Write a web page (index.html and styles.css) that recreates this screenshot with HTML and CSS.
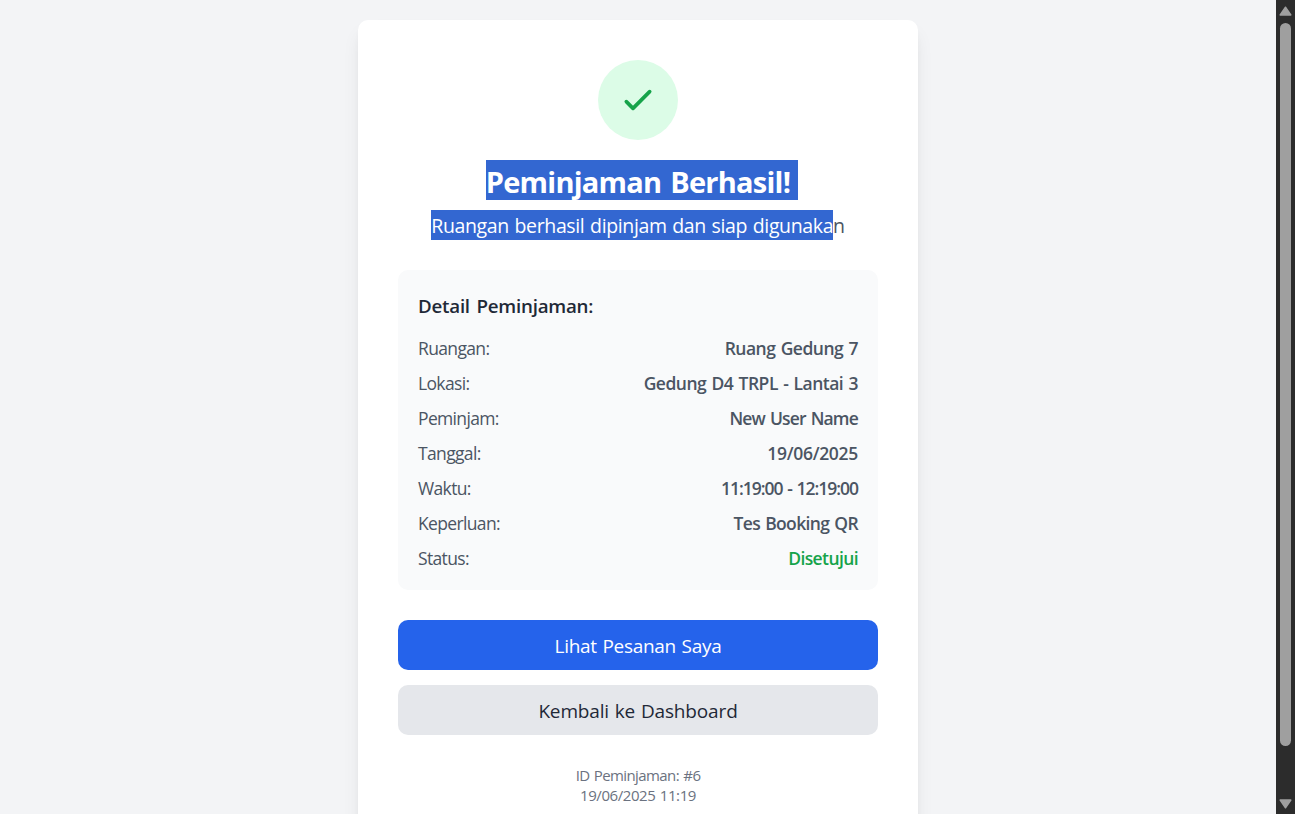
FILE: index.html
```html
<!DOCTYPE html>
<html lang="id">
<head>
<meta charset="utf-8">
<title>Peminjaman Berhasil</title>
<link rel="stylesheet" href="styles.css">
</head>
<body>
<div class="window">
  <main class="page">
    <section class="card">
      <div class="badge">
        <svg width="40" height="40" viewBox="0 0 24 24" fill="none" stroke="currentColor" stroke-width="2" stroke-linecap="round" stroke-linejoin="round"><path d="M5 13l4 4L19 7"/></svg>
      </div>
      <h1 class="title"><span class="selected title-selection">Peminjaman Berhasil!</span></h1>
      <p class="subtitle"><span class="selected">Ruangan berhasil dipinjam dan siap digunaka</span><span>n</span></p>
      <div class="details">
        <h2 class="details-title"><span>Detail Peminjaman:</span></h2>
        <dl class="rows">
          <div class="row"><dt>Ruangan:</dt><dd class="v-room">Ruang Gedung 7</dd></div>
          <div class="row"><dt>Lokasi:</dt><dd class="v-place">Gedung D4 TRPL - Lantai 3</dd></div>
          <div class="row"><dt>Peminjam:</dt><dd class="v-user">New User Name</dd></div>
          <div class="row"><dt>Tanggal:</dt><dd class="v-date">19/06/2025</dd></div>
          <div class="row"><dt>Waktu:</dt><dd class="v-time">11:19:00 - 12:19:00</dd></div>
          <div class="row"><dt>Keperluan:</dt><dd class="v-use">Tes Booking QR</dd></div>
          <div class="row"><dt>Status:</dt><dd class="v-status">Disetujui</dd></div>
        </dl>
      </div>
      <div class="actions">
        <a class="button primary">Lihat Pesanan Saya</a>
        <a class="button secondary">Kembali ke Dashboard</a>
      </div>
      <footer class="meta">
        <p class="meta-id">ID Peminjaman: #6</p>
        <p class="meta-time">19/06/2025 11:19</p>
      </footer>
    </section>
  </main>
  <div class="scrollbar">
    <svg width="13" height="10" viewBox="0 0 13 10"><path d="M6.5 1.2L11.8 9H1.2z" fill="#9f9f9f" stroke="#9f9f9f" stroke-width="1.5" stroke-linejoin="round"/></svg>
    <div class="thumb"></div>
    <svg width="13" height="10" viewBox="0 0 13 10"><path d="M6.5 8.8L11.8 1H1.2z" fill="#9f9f9f" stroke="#9f9f9f" stroke-width="1.5" stroke-linejoin="round"/></svg>
  </div>
</div>
</body>
</html>
```
FILE: styles.css
```css
* { box-sizing: border-box; margin: 0; padding: 0; }
body { font-family: "Open Sans", "Noto Sans", sans-serif; color: #1f2937; overflow: hidden; }
.window { display: flex; height: 814px; overflow: hidden; background: #f3f4f6; }
.page { flex: 1; display: flex; justify-content: center; align-items: flex-start; padding-top: 20px; }
.card { width: 560px; height: 835px; padding: 40px; background: #fff; border-radius: 10px; box-shadow: 0 12px 19px -4px rgba(0,0,0,.1), 0 5px 8px -5px rgba(0,0,0,.1); }
.badge { width: 80px; height: 80px; margin: 0 auto 20px; border-radius: 50%; background: #dcfce7; color: #16a34a; display: flex; align-items: center; justify-content: center; }
.badge svg { stroke-width: 2.2; }
.title { height: 40px; margin-bottom: 10px; padding-left: 8px; display: flex; justify-content: center; font-size: 29px; line-height: 43px; font-weight: 700; letter-spacing: -.75px; word-spacing: 2px; white-space: nowrap; }
.selected { background: #3367d1; color: #fff; }
.title-selection { height: 40px; padding-right: 8px; }
.subtitle { display: flex; justify-content: center; height: 30px; margin-bottom: 30px; font-size: 19.5px; line-height: 32px; letter-spacing: -.37px; word-spacing: 1px; color: #4b5563; white-space: nowrap; }
.details { height: 320px; padding: 20px; margin-bottom: 30px; border-radius: 10px; background: #f9fafb; }
.details-title { height: 30px; margin-bottom: 15px; font-size: 18.75px; line-height: 31px; font-weight: 600; letter-spacing: -.24px; word-spacing: 2px; }
.rows { display: flex; flex-direction: column; gap: 10px; font-size: 17.5px; line-height: 26px; color: #4b5563; white-space: nowrap; }
.row { display: flex; justify-content: space-between; height: 25px; }
.row dt { letter-spacing: -.65px; }
.row dd { font-weight: 600; letter-spacing: -.5px; word-spacing: 1.2px; }
.row .v-user { letter-spacing: -.83px; }
.row .v-date { letter-spacing: -.3px; }
.row .v-time { letter-spacing: -1.02px; }
.row .v-use { letter-spacing: -.65px; }
.row .v-status { color: #16a34a; letter-spacing: -.6px; }
.actions { display: flex; flex-direction: column; gap: 15px; margin-bottom: 30px; }
.button { height: 50px; border-radius: 10px; font-size: 19px; line-height: 52px; text-align: center; }
.primary { background: #2563eb; color: #fff; letter-spacing: -.3px; word-spacing: 1px; font-weight: 500; }
.secondary { background: #e5e7eb; color: #1f2937; letter-spacing: -.15px; word-spacing: 1px; }
.meta { text-align: center; font-size: 15px; line-height: 20px; color: #6b7280; letter-spacing: -.6px; word-spacing: 1px; }
.meta-time { letter-spacing: -.43px; }
.scrollbar { width: 19px; background: #2c2c2c; display: flex; flex-direction: column; align-items: center; padding: 6px 0 5px; }
.thumb { width: 11px; height: 723px; margin: 7px 0 auto; border-radius: 6px; background: #9f9f9f; }
```
